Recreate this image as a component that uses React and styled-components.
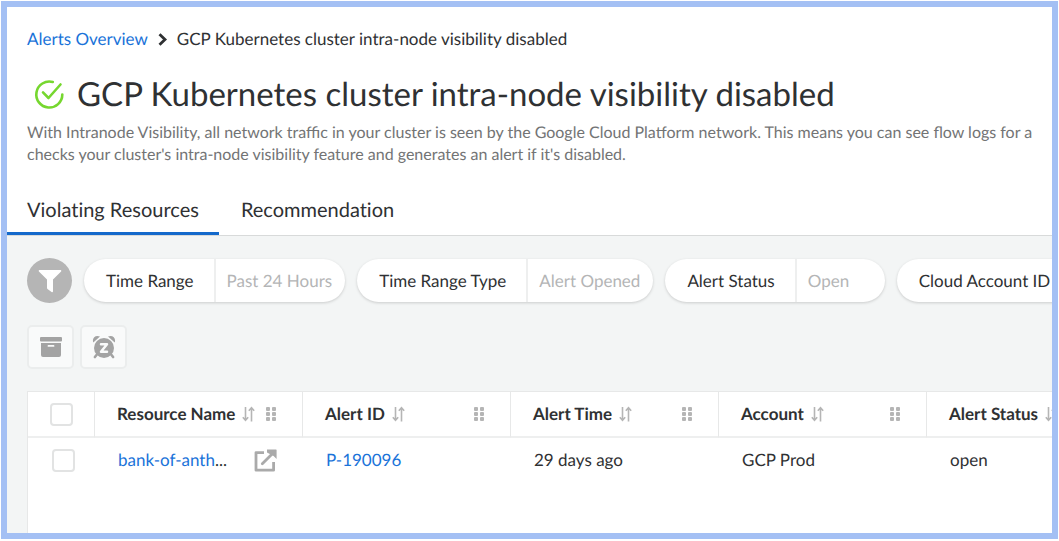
import React from "react";
import styled, { createGlobalStyle } from "styled-components";

const GlobalStyle = createGlobalStyle`
  *, *::before, *::after { box-sizing: border-box; }
  body {
    margin: 0;
    background: #ffffff;
    color: #2f3133;
    font-family: Lato, "Liberation Sans", sans-serif;
    font-size: 17px;
    line-height: 22px;
    text-rendering: geometricPrecision;
    overflow: hidden;
  }
  button, input { font: inherit; color: inherit; text-rendering: inherit; }
`;

const Page = styled.div`
  min-height: 100vh;
  padding: 1px 1px 2px;
  display: flex;
`;

const Frame = styled.main`
  flex: 1;
  min-width: 0;
  display: flex;
  flex-direction: column;
  border: 6px solid #a4c0f4;
  overflow: hidden;
`;

const Header = styled.header`
  padding: 20px 0 0 20px;
`;

const Breadcrumb = styled.nav`
  display: flex;
  align-items: center;
  gap: 9px;
  height: 24px;
`;

const Link = styled.a`
  color: #1a73d9;
  text-decoration: none;
`;

const TitleRow = styled.div`
  display: flex;
  align-items: center;
  gap: 12px;
  margin-top: 19px;
  padding-left: 7px;
  height: 48px;
`;

const Title = styled.h1`
  margin: 0;
  font-size: 33px;
  font-weight: 400;
  line-height: 48px;
  white-space: nowrap;
`;

const Description = styled.p`
  margin: 4px 0 0;
  color: #737475;
  font-size: 16px;
  white-space: nowrap;
`;

const Tabs = styled.div`
  display: flex;
  gap: 2px;
  margin-top: 22px;
  border-bottom: 1px solid #d8dada;
`;

const Tab = styled.button`
  height: 47px;
  padding: 0 20px;
  border: 0;
  border-bottom: 3px solid ${(p) => (p.$active ? "#1469cb" : "transparent")};
  background: none;
  font-size: 20px;
  line-height: 24px;
  font-variant-ligatures: none;
`;

const Content = styled.section`
  flex: 1;
  display: flex;
  flex-direction: column;
  padding: 22px 0 0 20px;
  background: #f3f5f5;
`;

const Filters = styled.div`
  display: flex;
  align-items: center;
  gap: 12px;
`;

const FilterButton = styled.button`
  display: grid;
  place-items: center;
  flex: none;
  width: 45px;
  height: 45px;
  padding: 0;
  border: 0;
  border-radius: 50%;
  background: #b5b5b5;
`;

const Pill = styled.button`
  display: flex;
  flex: none;
  align-items: stretch;
  height: 43px;
  padding: 0;
  border: 0;
  border-radius: 22px;
  background: #ffffff;
  box-shadow: 0 1px 3px rgba(0, 0, 0, 0.17);
  line-height: 43px;
  white-space: nowrap;
`;

const PillLabel = styled.span`
  padding: 0 20px 0 22px;
`;

const PillValue = styled.span`
  min-width: ${(p) => p.$min}px;
  padding: 0 13px 0 11px;
  border-left: 2px solid #eeefef;
  color: #b4b5b6;
  text-align: left;
`;

const Actions = styled.div`
  display: flex;
  gap: 6px;
  margin-top: 22px;
`;

const ActionButton = styled.button`
  display: grid;
  place-items: center;
  width: 47px;
  height: 44px;
  padding: 0;
  border: 2px solid #ebeded;
  border-radius: 5px;
  background: #f9fafa;
`;

const TablePanel = styled.div`
  flex: 1;
  margin-top: 22px;
  border: 1px solid #e7e8e8;
  border-width: 1px 0 0 1px;
  background: #ffffff;
`;

const Table = styled.table`
  width: 1107px;
  table-layout: fixed;
  border-collapse: separate;
  border-spacing: 0;
`;

const CheckCol = styled.col`
  width: 67px;
`;

const HeadCell = styled.th`
  height: 46px;
  padding: 0 25px 0 22px;
  border-right: 1px solid #e7e8e8;
  border-bottom: 2px solid #eeefef;
  font-weight: 700;
  text-align: left;
`;

const Cell = styled.td`
  height: 44px;
  padding: 0 26px 0 23px;
`;

const CheckHeadCell = styled(HeadCell)`
  padding: 0 0 0 22px;
`;

const CheckCell = styled(Cell)`
  padding: 0 0 0 24px;
`;

const CellRow = styled.div`
  display: flex;
  align-items: center;
  justify-content: space-between;
`;

const SortButton = styled.button`
  display: flex;
  align-items: center;
  gap: 7px;
  padding: 0;
  border: 0;
  background: none;
  font-weight: 700;
  white-space: nowrap;
`;

const Checkbox = styled.input.attrs({ type: "checkbox" })`
  appearance: none;
  display: block;
  width: 23px;
  height: 23px;
  margin: 0;
  border: 2px solid #e2e3e3;
  border-radius: 4px;
  background: #ffffff;
`;

const Icon = styled.svg`
  display: block;
  flex: none;
`;

const Chevron = () => (
  <Icon width="11" height="13" viewBox="0 0 11 13" fill="none" stroke="#2f3133" strokeWidth="2.8">
    <path d="M2.5 1.2 8 6.5 2.5 11.8" />
  </Icon>
);

const CheckCircle = () => (
  <Icon width="31" height="31" viewBox="0 0 31 31" fill="none" stroke="#76d72f" strokeWidth="2.6" strokeLinecap="round" strokeLinejoin="round">
    <path d="M18.8 3A13 13 0 1 0 28.3 15.5" />
    <path d="m9 13.4 5.5 5.6L26.5 5.5" />
  </Icon>
);

const Funnel = () => (
  <Icon width="24" height="24" viewBox="0 0 24 24" fill="#ffffff">
    <path d="M1.2 1h21.6q1 .6.3 1.4L15 10.6v11.9q-.4 1-1.4.4L9.5 20q-.5-.4-.5-1v-8.4L.9 2.4Q.2 1.6 1.2 1Z" />
  </Icon>
);

const Archive = () => (
  <Icon width="24" height="22" viewBox="0 0 24 22" fill="#a3a3a3">
    <rect x="1" y="1" width="22" height="4.6" rx="1" />
    <path fillRule="evenodd" d="M2 7h20v12q0 2-2 2H4q-2 0-2-2V7Zm7.3 2q-.7 0-.7.9t.7.9h5.4q.7 0 .7-.9t-.7-.9H9.3Z" />
  </Icon>
);

const Snooze = () => (
  <Icon width="24" height="24" viewBox="0 0 24 24">
    <path fill="none" stroke="#a3a3a3" strokeLinecap="round" strokeWidth="2.6" d="m4.5 20-1.6 2M19.5 20l1.6 2" />
    <path fill="#a3a3a3" d="M1.3 7.6C-.4 3 3.7-.5 8 1.6ZM22.7 7.6C24.4 3 20.3-.5 16 1.6Z" />
    <circle cx="12" cy="13" r="10" fill="#a3a3a3" />
    <path fill="none" stroke="#f9fafa" strokeWidth="2.5" strokeLinejoin="round" strokeLinecap="round" d="M9 9.3h6L9 16.8h6" />
  </Icon>
);

const Sort = () => (
  <Icon width="13" height="16" viewBox="0 0 13 16" fill="none" stroke="#b5b5b5" strokeWidth="1.6">
    <path d="M3.5 1v13M.8 11.2l2.7 3 2.7-3M9.5 15.5V2M6.8 4.8l2.7-3 2.7 3" />
  </Icon>
);

const Grip = () => (
  <Icon width="12" height="16" viewBox="0 0 12 16" fill="#b5b5b5">
    {[1, 6, 11].map((y) => (
      <React.Fragment key={y}>
        <rect x="1" y={y} width="4" height="4" rx="1" />
        <rect x="7" y={y} width="4" height="4" rx="1" />
      </React.Fragment>
    ))}
  </Icon>
);

const External = () => (
  <Icon width="23" height="23" viewBox="0 0 23 23" fill="none" stroke="#aaaaaa" strokeWidth="2.8">
    <path strokeLinejoin="round" d="M10 3.6H2v17.6h17.6V13" />
    <path strokeLinecap="round" d="m8.3 14.8 11-11" />
    <path fill="#aaaaaa" stroke="none" d="M13 .5h9q.6 0 .6.6v9l-3-3-6.6-3.6Z" />
  </Icon>
);

const filters = [
  { label: "Time Range", value: "Past 24 Hours", min: 0 },
  { label: "Time Range Type", value: "Alert Opened", min: 0 },
  { label: "Alert Status", value: "Open", min: 90 },
  { label: "Cloud Account ID", value: "", min: 90 },
];

const columns = ["Resource Name", "Alert ID", "Alert Time", "Account", "Alert Status"];

export default function App() {
  return (
    <>
      <GlobalStyle />
      <Page>
        <Frame>
          <Header>
            <Breadcrumb aria-label="Breadcrumb">
              <Link href="#alerts">Alerts Overview</Link>
              <Chevron />
              <span>GCP Kubernetes cluster intra-node visibility disabled</span>
            </Breadcrumb>
            <TitleRow>
              <CheckCircle />
              <Title>GCP Kubernetes cluster intra-node visibility disabled</Title>
            </TitleRow>
            <Description>
              With Intranode Visibility, all network traffic in your cluster is seen by the Google Cloud Platform
              network. This means you can see flow logs for a
              <br />
              checks your cluster's intra-node visibility feature and generates an alert if it's disabled.
            </Description>
          </Header>
          <Tabs role="tablist">
            <Tab role="tab" aria-selected="true" $active>Violating Resources</Tab>
            <Tab role="tab" aria-selected="false">Recommendation</Tab>
          </Tabs>
          <Content>
            <Filters>
              <FilterButton aria-label="Filter"><Funnel /></FilterButton>
              {filters.map((f) => (
                <Pill key={f.label}>
                  <PillLabel>{f.label}</PillLabel>
                  <PillValue $min={f.min}>{f.value}</PillValue>
                </Pill>
              ))}
            </Filters>
            <Actions>
              <ActionButton aria-label="Archive"><Archive /></ActionButton>
              <ActionButton aria-label="Snooze"><Snooze /></ActionButton>
            </Actions>
            <TablePanel>
              <Table>
                <colgroup>
                  <CheckCol />
                  {columns.map((c) => <col key={c} />)}
                </colgroup>
                <thead>
                  <tr>
                    <CheckHeadCell><Checkbox aria-label="Select all" /></CheckHeadCell>
                    {columns.map((c) => (
                      <HeadCell key={c}>
                        <CellRow>
                          <SortButton>{c}<Sort /></SortButton>
                          <Grip />
                        </CellRow>
                      </HeadCell>
                    ))}
                  </tr>
                </thead>
                <tbody>
                  <tr>
                    <CheckCell><Checkbox aria-label="Select bank-of-anth" /></CheckCell>
                    <Cell>
                      <CellRow>
                        <span><Link href="#resource">bank-of-anth</Link>...</span>
                        <Link href="#open" aria-label="Open resource"><External /></Link>
                      </CellRow>
                    </Cell>
                    <Cell><Link href="#alert">P-190096</Link></Cell>
                    <Cell>29 days ago</Cell>
                    <Cell>GCP Prod</Cell>
                    <Cell>open</Cell>
                  </tr>
                </tbody>
              </Table>
            </TablePanel>
          </Content>
        </Frame>
      </Page>
    </>
  );
}
